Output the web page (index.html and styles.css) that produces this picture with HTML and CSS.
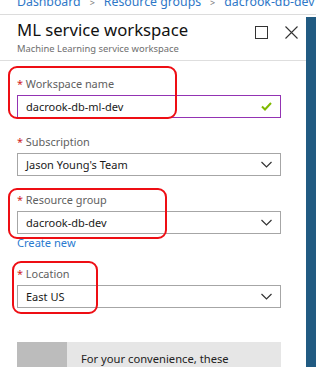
FILE: index.html
```html
<!DOCTYPE html>
<html>
<head>
<meta charset="utf-8">
<link rel="stylesheet" href="styles.css">
</head>
<body>
<div class="page">
  <div class="breadcrumb">
    <div class="crumbs"><span>Dashboard</span><span class="sep">&gt;</span><span>Resource groups</span><span class="sep">&gt;</span><span>dacrook-db-dev</span></div>
  </div>
  <div class="main">
    <div class="blade">
      <div class="header">
        <div class="titles">
          <div class="title">ML service workspace</div>
          <div class="subtitle">Machine Learning service workspace</div>
        </div>
        <div class="actions">
          <svg class="icon" width="13" height="13" viewBox="0 0 13 13"><rect x="0.5" y="0.5" width="12" height="12" fill="none" stroke="#333" stroke-width="1"/></svg>
          <svg class="icon" width="13" height="13" viewBox="0 0 13 13"><path d="M0.5 0.5 L12.5 12.5 M12.5 0.5 L0.5 12.5" stroke="#333" stroke-width="1.1" fill="none"/></svg>
        </div>
      </div>
      <div class="form">
        <div class="field">
          <div class="label"><span class="req">*</span> Workspace name</div>
          <div class="input active"><span>dacrook-db-ml-dev</span>
            <svg width="11" height="9" viewBox="0 0 11 9"><path d="M1 4.5 L4 7.5 L10 1" stroke="#7fba00" stroke-width="2" fill="none"/></svg>
          </div>
        </div>
        <div class="field">
          <div class="label"><span class="req">*</span> Subscription</div>
          <div class="input"><span>Jason Young's Team</span>
            <svg width="11" height="7" viewBox="0 0 11 7"><path d="M0.5 1 L5.5 6 L10.5 1" stroke="#333" stroke-width="1.2" fill="none"/></svg>
          </div>
        </div>
        <div class="field">
          <div class="label"><span class="req">*</span> Resource group</div>
          <div class="input"><span>dacrook-db-dev</span>
            <svg width="11" height="7" viewBox="0 0 11 7"><path d="M0.5 1 L5.5 6 L10.5 1" stroke="#333" stroke-width="1.2" fill="none"/></svg>
          </div>
          <a class="link">Create new</a>
        </div>
        <div class="field loc">
          <div class="label"><span class="req">*</span> Location</div>
          <div class="input"><span>East US</span>
            <svg width="11" height="7" viewBox="0 0 11 7"><path d="M0.5 1 L5.5 6 L10.5 1" stroke="#333" stroke-width="1.2" fill="none"/></svg>
          </div>
        </div>
        <div class="info">
          <div class="info-side"></div>
          <div class="info-text">For your convenience, these</div>
        </div>
      </div>
    </div>
    <div class="rail"></div>
  </div>
  <div class="mark m1"></div>
  <div class="mark m2"></div>
  <div class="mark m3"></div>
</div>
</body>
</html>
```
FILE: styles.css
```css
html, body {
  margin: 0;
  padding: 0;
  background: #fff;
}
.page {
  position: relative;
  width: 316px;
  height: 367px;
  overflow: hidden;
  font-family: "Noto Sans", "Open Sans", sans-serif;
  color: #222;
}
.breadcrumb {
  height: 14px;
  overflow: hidden;
  border-bottom: 1px solid #dcdcdc;
}
.crumbs {
  margin-top: -8px;
  padding-left: 17px;
  font-size: 12.3px;
  line-height: 20px;
  color: #2e77c7;
  white-space: nowrap;
}
.crumbs .sep {
  color: #777;
  margin: 0 9px;
  font-size: 9px;
}
.main {
  display: flex;
  height: 352px;
}
.blade {
  flex: 1;
}
.rail {
  width: 10px;
  margin-top: 2px;
  background: #215b82;
}
.header {
  display: flex;
  justify-content: space-between;
  padding: 3px 8px 4px 17px;
  border-bottom: 1px solid #dedede;
}
.title {
  font-size: 16.7px;
  line-height: 24px;
  color: #111;
}
.subtitle {
  font-size: 9.4px;
  line-height: 14px;
  color: #6e6e6e;
}
.actions {
  display: flex;
  gap: 17px;
  padding-top: 8px;
}
.form {
  padding: 13px 0 0 17px;
  width: 264px;
}
.field {
  margin-bottom: 14px;
}
.label {
  font-size: 10.9px;
  line-height: 19px;
  color: #606060;
  margin-bottom: 2px;
}
.req {
  color: #d01c1c;
}
.input {
  height: 21px;
  border: 1px solid #a6a6a6;
  display: flex;
  align-items: center;
  justify-content: space-between;
  padding: 0 8px;
  font-size: 11px;
  color: #1a1a1a;
}
.input.active {
  border-color: #9333b3;
}
.link {
  display: block;
  font-size: 11.1px;
  line-height: 15px;
  color: #2a7ad0;
  margin-top: 1px;
}
.field.loc {
  margin-bottom: 34px;
}
.info {
  display: flex;
  height: 40px;
  background: #e6e6e6;
}
.info-side {
  width: 50px;
  background: #bcbcbc;
}
.info-text {
  padding: 8px 0 0 14px;
  font-size: 11.2px;
  line-height: 18px;
  color: #222;
}
.mark {
  position: absolute;
  border: 2px solid #ee0e14;
  border-radius: 9px;
  box-sizing: border-box;
}
.m1 { left: 8px; top: 66px; width: 169px; height: 53px; }
.m2 { left: 8px; top: 188px; width: 159px; height: 51px; }
.m3 { left: 12px; top: 261px; width: 86px; height: 53px; }
```
